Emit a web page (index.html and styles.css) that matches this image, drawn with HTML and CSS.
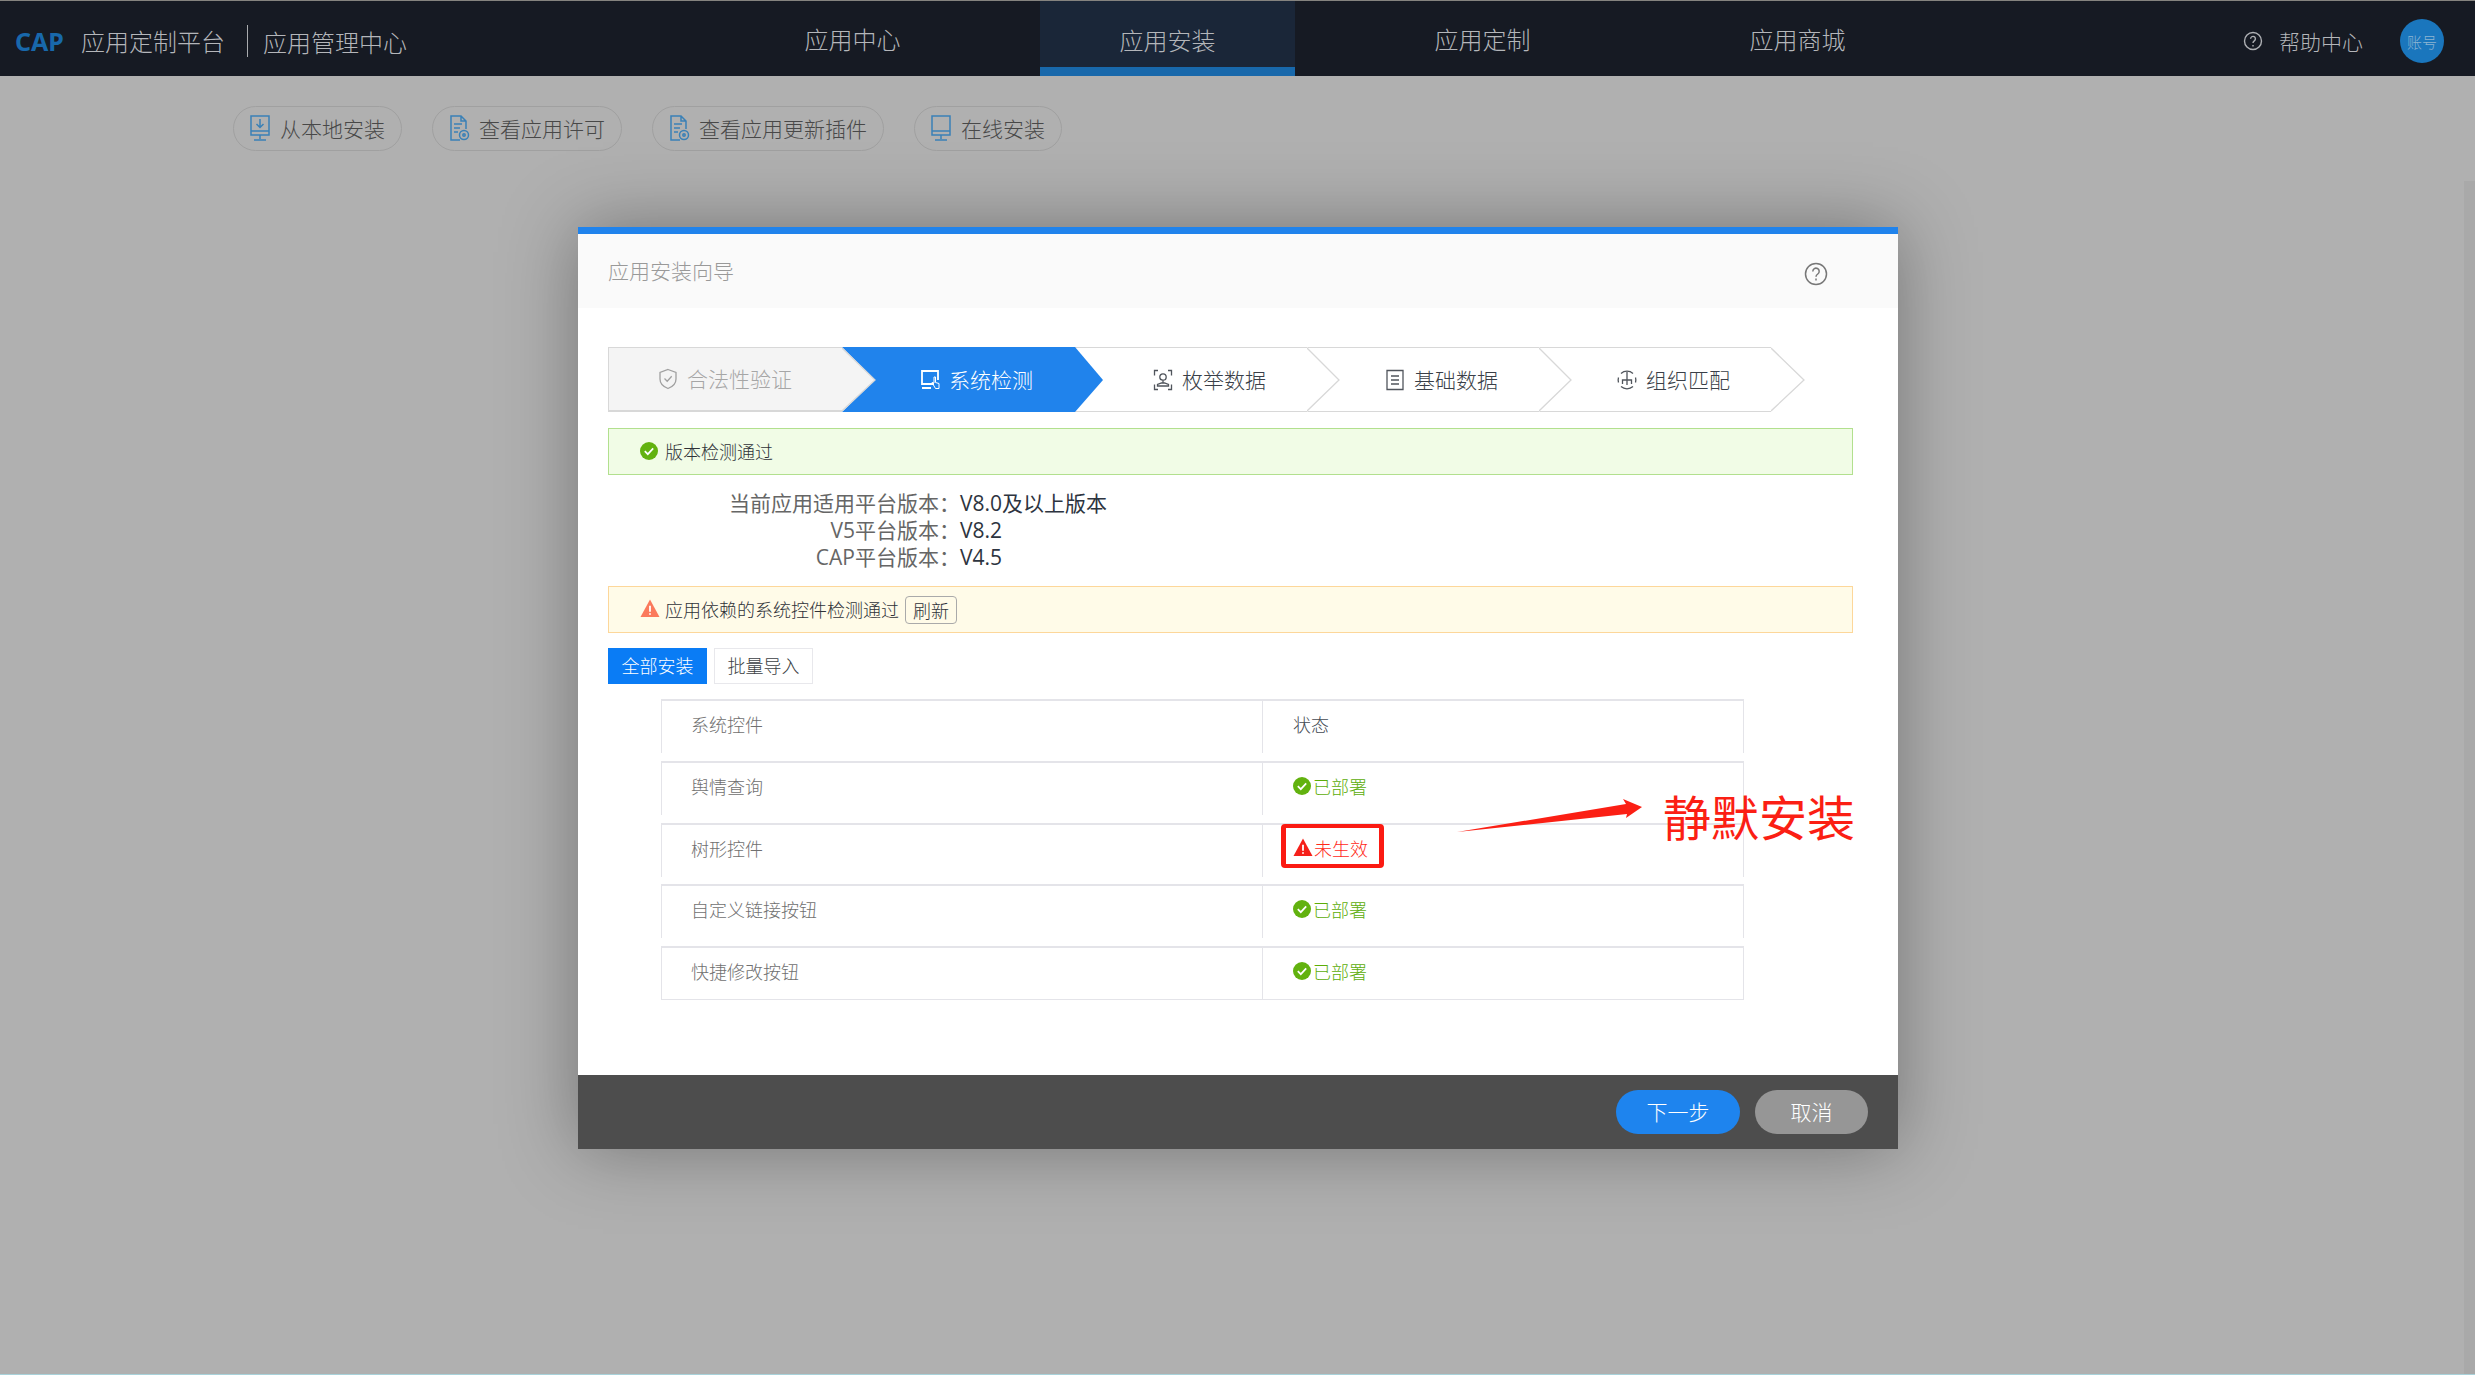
FILE: index.html
```html
<!DOCTYPE html>
<html>
<head>
  <meta charset="UTF-8">
  <meta name="viewport" content="width=device-width, initial-scale=1.0">
  <link rel="stylesheet" href="styles.css">
</head>
<body>
  <div class="header">
    <div class="brand">
      <span class="brand-logo">CAP</span>
      <span class="brand-name">应用定制平台</span>
      <span class="brand-sub">应用管理中心</span>
    </div>
    <div class="nav">
      <div class="nav-item">应用中心</div>
      <div class="nav-item active">应用安装</div>
      <div class="nav-item">应用定制</div>
      <div class="nav-item">应用商城</div>
    </div>
    <div class="header-right">
      <svg class="help-icon" viewBox="0 0 20 20"><circle cx="10" cy="10" r="8.5"/><path d="M7.6 7.8a2.4 2.4 0 1 1 3.7 2c-.9.6-1.3 1-1.3 2.2"/><path d="M10 14v1.4"/></svg>
      <span class="help-text">帮助中心</span>
      <div class="avatar">账号</div>
    </div>
  </div>

  <div class="toolbar">
    <div class="tool-btn">
      <svg class="tool-icon" viewBox="0 0 22 30"><path d="M2 3h18v19H2zM2 18h18M11 6v8M7.5 11l3.5 3.5 3.5-3.5M11 22v4M5 27h12"/></svg>
      从本地安装
    </div>
    <div class="tool-btn">
      <svg class="tool-icon" viewBox="0 0 22 30"><path d="M12 27H3V3h10l5 5v8M13 3v5h5M6 11h8M6 15h6M6 19h4"/><circle cx="16" cy="22" r="4.5"/><circle cx="16" cy="22" r="1.2"/></svg>
      查看应用许可
    </div>
    <div class="tool-btn">
      <svg class="tool-icon" viewBox="0 0 22 30"><path d="M12 27H3V3h10l5 5v8M13 3v5h5M6 11h8M6 15h6M6 19h4"/><circle cx="16" cy="22" r="4.5"/><circle cx="16" cy="22" r="1.2"/></svg>
      查看应用更新插件
    </div>
    <div class="tool-btn">
      <svg class="tool-icon" viewBox="0 0 22 30"><path d="M2 3h18v19H2zM2 18h18M11 22v4M5 27h12"/></svg>
      在线安装
    </div>
  </div>

  <div class="modal">
    <div class="modal-head">
      <span>应用安装向导</span>
      <svg class="modal-help" viewBox="0 0 24 24"><circle cx="12" cy="12" r="10.5"/><path d="M8.8 9.4a3.2 3.2 0 1 1 5 2.6c-1.2.8-1.8 1.4-1.8 2.8"/><path d="M12 16.6v1.8"/></svg>
    </div>

    <div class="modal-body">
      <div class="steps">
        <div class="step step-done">
          <svg class="step-icon" viewBox="0 0 20 22"><path d="M10 1.500l8 3v6.500c0 4.500-3.500 7.800-8 9.500-4.500-1.700-8-5-8-9.500V4.500z"/><path d="M6.500 10.500l2.700 2.700 4.500-5"/></svg>
          <span class="step-text">合法性验证</span>
          <svg class="step-tip" viewBox="0 0 34 65"><path class="tip-fill" d="M0 0L33 33 0 65z"/><path class="tip-line" d="M0 1L33 33 0 64"/></svg>
        </div>
        <div class="step step-current">
          <svg class="step-icon" viewBox="0 0 20 22"><path d="M14 15H2V2h16v9M2 19h9"/><path class="hand" d="M14 8v6l-2-.5 3.500 6h3.500v-5l-3.500-1V8z"/></svg>
          <span class="step-text">系统检测</span>
          <svg class="step-tip" viewBox="0 0 34 65"><path class="tip-fill" d="M0 0L28 33 0 65z"/></svg>
        </div>
        <div class="step">
          <svg class="step-icon" viewBox="0 0 20 22"><path d="M5 1.500H1.500v5M15 1.500h3.500v5M5 20.500H1.500v-5M15 20.500h3.500v-5"/><circle cx="10" cy="8" r="3.200"/><path d="M10 11.200v3M4.500 17h11v-1.500l-4-1.500h-3l-4 1.500z"/></svg>
          <span class="step-text">枚举数据</span>
          <svg class="step-tip" viewBox="0 0 34 65"><path class="tip-fill" d="M0 0L32 33 0 65z"/><path class="tip-line" d="M0 1L32 33 0 64"/></svg>
        </div>
        <div class="step">
          <svg class="step-icon" viewBox="0 0 20 22"><path d="M2 1.500h16v19H2zM6 7h8M6 11h8M6 15h8"/></svg>
          <span class="step-text">基础数据</span>
          <svg class="step-tip" viewBox="0 0 34 65"><path class="tip-fill" d="M0 0L32 33 0 65z"/><path class="tip-line" d="M0 1L32 33 0 64"/></svg>
        </div>
        <div class="step">
          <svg class="step-icon" viewBox="0 0 20 22"><path d="M4 4.500a9 9 0 0 1 12 0M4 17.500a9 9 0 0 0 12 0M1.500 8.500a9 9 0 0 0 0 5M18.500 8.500a9 9 0 0 1 0 5"/><path d="M10 3v13M5.500 15v-4h9v4"/></svg>
          <span class="step-text">组织匹配</span>
          <svg class="step-tip" viewBox="0 0 34 65"><path class="tip-fill" d="M0 0L33 33 0 65z"/><path class="tip-line" d="M0 1L33 33 0 64"/></svg>
        </div>
      </div>

      <div class="alert alert-ok">
        <svg class="status-icon ok" viewBox="0 0 18 18"><circle cx="9" cy="9" r="9"/><path d="M4.800 9.200l3 3 5.400-5.800"/></svg>
        <span>版本检测通过</span>
      </div>

      <div class="version-info">
        <div class="version-label">当前应用适用平台版本：</div><div class="version-value">V8.0及以上版本</div>
        <div class="version-label">V5平台版本：</div><div class="version-value">V8.2</div>
        <div class="version-label">CAP平台版本：</div><div class="version-value">V4.5</div>
      </div>

      <div class="alert alert-warn">
        <svg class="status-icon warn" viewBox="0 0 18 18"><path d="M9 .5L18 17H0z"/><path class="mark" d="M9 6.500v5.500M9 13.500v1.500"/></svg>
        <span>应用依赖的系统控件检测通过</span>
        <span class="refresh-btn">刷新</span>
      </div>

      <div class="tabs">
        <div class="tab tab-active">全部安装</div>
        <div class="tab">批量导入</div>
      </div>

      <div class="plugin-table">
        <div class="plugin-row head">
          <div class="plugin-name">系统控件</div>
          <div class="plugin-status">状态</div>
        </div>
        <div class="plugin-row">
          <div class="plugin-name">舆情查询</div>
          <div class="plugin-status deployed"><svg class="status-icon ok" viewBox="0 0 18 18"><circle cx="9" cy="9" r="9"/><path d="M4.800 9.200l3 3 5.400-5.800"/></svg>已部署</div>
        </div>
        <div class="plugin-row">
          <div class="plugin-name">树形控件</div>
          <div class="plugin-status inactive"><svg class="status-icon bad" viewBox="0 0 18 18"><path d="M9 .5L18 17H0z"/><path class="mark" d="M9 6.500v5.500M9 13.500v1.500"/></svg>未生效</div>
        </div>
        <div class="plugin-row">
          <div class="plugin-name">自定义链接按钮</div>
          <div class="plugin-status deployed"><svg class="status-icon ok" viewBox="0 0 18 18"><circle cx="9" cy="9" r="9"/><path d="M4.800 9.200l3 3 5.400-5.800"/></svg>已部署</div>
        </div>
        <div class="plugin-row last">
          <div class="plugin-name">快捷修改按钮</div>
          <div class="plugin-status deployed"><svg class="status-icon ok" viewBox="0 0 18 18"><circle cx="9" cy="9" r="9"/><path d="M4.800 9.200l3 3 5.400-5.800"/></svg>已部署</div>
        </div>
      </div>
    </div>

    <div class="modal-foot">
      <div class="foot-btn btn-next">下一步</div>
      <div class="foot-btn btn-cancel">取消</div>
    </div>
  </div>

  <!-- red markup drawn on top of the screenshot -->
  <div class="mark-box"></div>
  <svg class="mark-arrow" viewBox="0 0 190 40"><path d="M1 37L170 9 167 4 186 12 170 23 171 19z"/></svg>
  <div class="mark-text">静默安装</div>

  <div class="scrollbar"></div>
</body>
</html>
```

FILE: styles.css
```css
* {
  margin: 0;
  padding: 0;
  box-sizing: border-box;
}

body {
  height: 100vh;
  background: #b0b0b0;
  border-bottom: 1px solid #a9d2da;
  font-family: "Noto Sans CJK SC", "Noto Sans", sans-serif;
  font-weight: 300;
  color: #333;
  overflow: hidden;
  position: relative;
}

.header {
  height: 76px;
  background: #161a23;
  border-top: 1px solid #85837f;
  display: flex;
  color: #b4b6ba;
  position: relative;
}

.brand {
  width: 725px;
  padding: 5px 0 0 15px;
  display: flex;
  align-items: center;
  font-size: 24px;
  flex-shrink: 0;
}

.brand-logo {
  font-family: "Noto Sans", sans-serif;
  font-size: 25px;
  font-weight: 700;
  color: #1868ab;
  width: 66px;
}

.brand-name {
  width: 167px;
  height: 32px;
  line-height: 32px;
  border-right: 1px solid #a9abae;
  margin-right: 15px;
  white-space: nowrap;
}

.nav {
  display: flex;
  gap: 60px;
}

.nav-item {
  width: 255px;
  height: 75px;
  display: flex;
  align-items: center;
  justify-content: center;
  font-size: 24px;
}

.nav-item.active {
  background: #1a2638;
  border-bottom: 9px solid #1868ab;
  padding-top: 10px;
}

.header-right {
  position: absolute;
  top: 18px;
  right: 31px;
  display: flex;
  align-items: center;
}

.help-icon {
  width: 20px;
  height: 20px;
  fill: none;
  stroke: #aeb0b4;
  stroke-width: 1.4;
  margin-right: 16px;
}

.help-text {
  font-size: 21px;
  margin-right: 36px;
  width: 85px;
  white-space: nowrap;
}

.avatar {
  width: 44px;
  height: 44px;
  border-radius: 50%;
  background: #1a76bd;
  color: #8eb4d2;
  font-size: 15px;
  display: flex;
  align-items: center;
  justify-content: center;
}

.toolbar {
  padding: 30px 0 0 233px;
  display: flex;
  gap: 30px;
}

.tool-btn {
  height: 45px;
  padding: 0 16px 2px 15px;
  border: 1.5px solid #a0a0a0;
  border-radius: 23px;
  display: flex;
  align-items: center;
  gap: 9px;
  font-size: 21px;
  color: #484848;
  white-space: nowrap;
}

.tool-icon {
  width: 22px;
  height: 30px;
  fill: none;
  stroke: #3a80b6;
  stroke-width: 1.5;
  flex-shrink: 0;
}

.modal {
  position: absolute;
  top: 227px;
  left: 578px;
  width: 1320px;
  height: 922px;
  background: #fff;
  border-top: 7px solid #2083ec;
  box-shadow: 0 0 70px rgba(0, 0, 0, 0.34);
  display: flex;
  flex-direction: column;
}

.modal-head {
  height: 74px;
  background: #fafafa;
  padding: 0 70px 2px 30px;
  display: flex;
  align-items: center;
  justify-content: space-between;
  font-size: 21px;
  color: #999;
  flex-shrink: 0;
}

.modal-help {
  width: 24px;
  height: 24px;
  fill: none;
  stroke: #777;
  stroke-width: 1.5;
  margin-top: 7px;
}

.modal-body {
  flex: 1;
  padding: 39px 46px 0 30px;
}

.steps {
  display: flex;
  height: 65px;
}

.step {
  width: 232px;
  height: 65px;
  padding-left: 78px;
  position: relative;
  display: flex;
  align-items: center;
  gap: 9px;
  font-size: 21px;
  color: #3a3f48;
  background: #fff;
  border-top: 1px solid #d8d8d8;
  border-bottom: 1px solid #d8d8d8;
}

.step-text {
  margin-top: -2px;
}

.step:nth-child(1) { z-index: 5; }
.step:nth-child(2) { z-index: 4; width: 233px; }
.step:nth-child(3) { z-index: 3; }
.step:nth-child(4) { z-index: 2; }
.step:nth-child(5) { z-index: 1; }

.step-icon {
  width: 20px;
  height: 22px;
  fill: none;
  stroke: #50555c;
  stroke-width: 1.3;
  flex-shrink: 0;
}

.step-tip {
  position: absolute;
  top: -1px;
  left: 100%;
  width: 34px;
  height: 65px;
}

.tip-fill {
  fill: #fff;
}

.tip-line {
  fill: none;
  stroke: #d8d8d8;
  stroke-width: 1.3;
}

.step-done {
  width: 234px;
  padding-left: 49px;
  background: #f4f4f4;
  color: #a6a6a6;
  border-left: 1px solid #d8d8d8;
  border-bottom-width: 2px;
}

.step-done .step-icon {
  stroke: #a0a0a0;
}

.step-done .tip-fill {
  fill: #f4f4f4;
}

.step-current {
  background: #2083ec;
  color: #fff;
  border-color: #2083ec;
}

.step-current .step-icon {
  stroke: #fff;
  stroke-width: 1.8;
}

.step-current .step-icon .hand {
  stroke-width: 1;
}

.step-current .tip-fill {
  fill: #2083ec;
}

.alert {
  height: 47px;
  width: 1245px;
  padding: 0 0 2px 31px;
  display: flex;
  align-items: center;
  font-size: 18px;
  color: #2f3238;
}

.alert-ok {
  margin-top: 16px;
  background: #f1fce6;
  border: 1px solid #b2e08e;
}

.alert-warn {
  background: #fffbe8;
  border: 1px solid #fdd79a;
}

.status-icon {
  width: 18px;
  height: 18px;
  margin-right: 7px;
  flex-shrink: 0;
}

.status-icon path {
  fill: none;
  stroke: #fff;
  stroke-width: 1.7;
}

.status-icon.ok {
  fill: #62b20f;
}

.status-icon.warn,
.status-icon.bad {
  width: 20px;
  height: 19px;
  margin-right: 5px;
}

.status-icon.warn path:first-child {
  fill: #fb7a5c;
  stroke: none;
}

.status-icon.bad path:first-child {
  fill: #f5201a;
  stroke: none;
}

.refresh-btn {
  margin: 2px 0 0 6px;
  width: 52px;
  height: 28px;
  border: 1px solid #aaa;
  border-radius: 4px;
  display: flex;
  align-items: center;
  justify-content: center;
}

.version-info {
  display: grid;
  grid-template-columns: 352px 1fr;
  grid-auto-rows: 27px;
  font-family: "Open Sans", "Noto Sans CJK SC", sans-serif;
  font-size: 21px;
  font-weight: 400;
  line-height: 27px;
  padding: 15px 0;
  box-sizing: content-box;
}

.version-label {
  text-align: right;
  color: #666;
}

.version-value {
  color: #2d3440;
}

.tabs {
  display: flex;
  gap: 7px;
  margin-top: 15px;
}

.tab {
  width: 99px;
  height: 36px;
  padding-bottom: 2px;
  display: flex;
  align-items: center;
  justify-content: center;
  font-size: 18px;
  color: #3c3f45;
  border: 1px solid #e8e8ec;
}

.tab-active {
  background: #0a7cf5;
  border-color: #0a7cf5;
  color: #fff;
}

.plugin-table {
  width: 1083px;
  margin: 15px 0 0 53px;
}

.plugin-row {
  height: 54px;
  margin-bottom: 7.75px;
  display: grid;
  grid-template-columns: 601px 1fr;
  border: 1px solid #e4e4e9;
  border-top-width: 2px;
  border-bottom: 0;
  font-size: 18px;
}

.plugin-row.last {
  margin-bottom: 0;
  border-bottom: 1px solid #e4e4e9;
}

.plugin-name {
  padding: 0 0 6px 29px;
  border-right: 1px solid #e4e4e9;
  color: #707070;
  display: flex;
  align-items: center;
}

.plugin-status {
  padding: 0 0 6px 30px;
  display: flex;
  align-items: center;
  color: #444a52;
}

.plugin-status .status-icon {
  margin-right: 2px;
}

.plugin-status .status-icon.bad {
  margin-right: 1px;
}

.deployed {
  color: #5cad08;
}

.inactive {
  color: #ff2a1a;
}

.modal-foot {
  height: 74px;
  background: #4d4d4d;
  padding: 0 30px 0 0;
  display: flex;
  align-items: center;
  justify-content: flex-end;
  gap: 15px;
  flex-shrink: 0;
}

.foot-btn {
  height: 44px;
  padding-bottom: 2px;
  border-radius: 22px;
  display: flex;
  align-items: center;
  justify-content: center;
  font-size: 21px;
  color: #fff;
}

.btn-next {
  width: 124px;
  background: #1e84ee;
}

.btn-cancel {
  width: 113px;
  background: #969696;
}

.mark-box {
  position: absolute;
  left: 1281px;
  top: 824px;
  width: 103px;
  height: 44px;
  border: solid #fb1a12;
  border-width: 4px 5px;
  border-radius: 4px;
}

.mark-arrow {
  position: absolute;
  left: 1456px;
  top: 795px;
  width: 190px;
  height: 40px;
  fill: #fb1f14;
}

.mark-text {
  position: absolute;
  left: 1663px;
  top: 780px;
  font-size: 48px;
  line-height: 70px;
  font-weight: 400;
  color: #fb1f14;
  white-space: nowrap;
}

.scrollbar {
  position: absolute;
  top: 181px;
  right: 0;
  bottom: 0;
  width: 11px;
  background: #a9a9a9;
}
```
